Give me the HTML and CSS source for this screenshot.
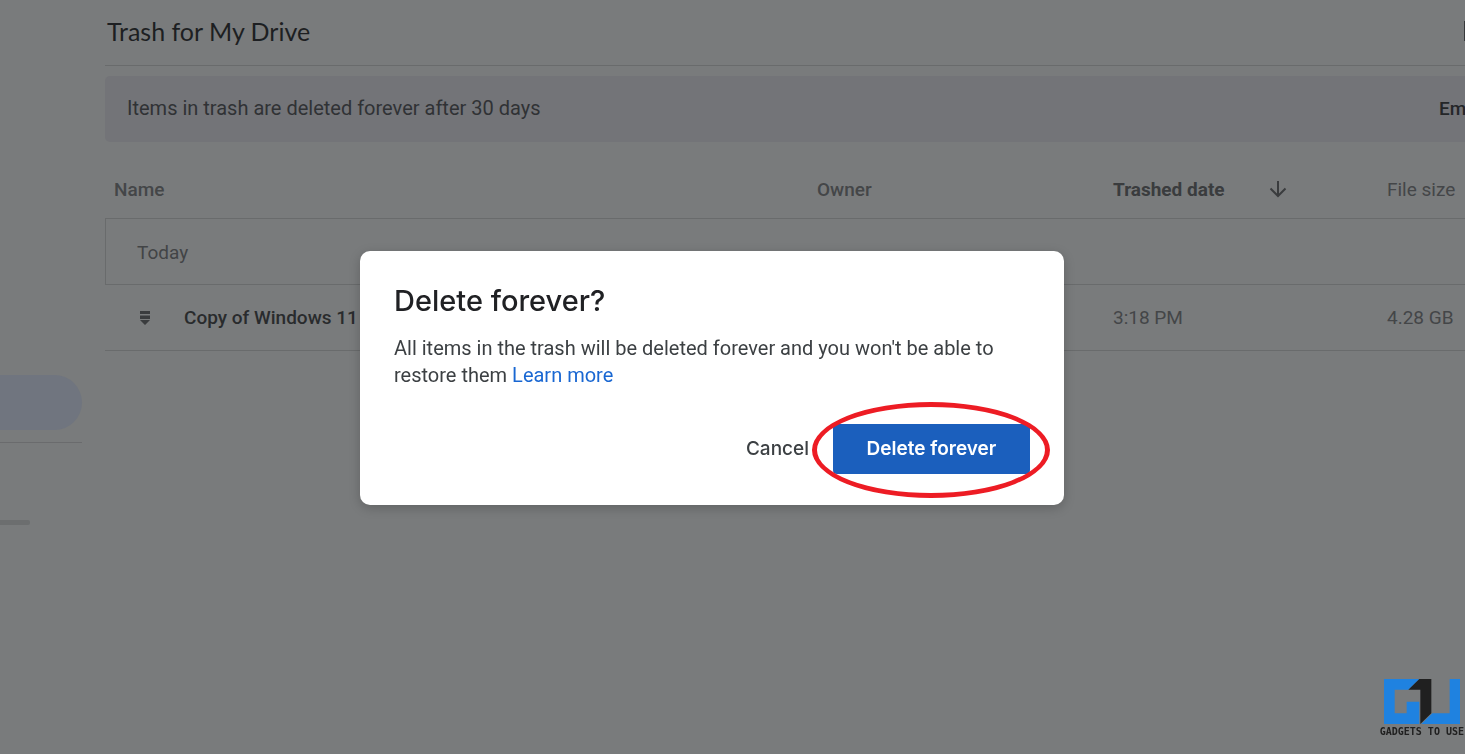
FILE: index.html
```html
<!DOCTYPE html>
<html lang="en">
<head>
<meta charset="utf-8">
<title>Trash for My Drive</title>
<link rel="stylesheet" href="styles.css">
</head>
<body>
<div class="app">
  <nav class="sidebar" aria-label="Drive">
    <div class="nav-active"></div>
    <div class="nav-divider"></div>
    <div class="storage-bar"></div>
  </nav>
  <main class="main">
    <header class="title-bar">
      <h1 class="title">Trash for My Drive</h1>
      <span class="view-icon"></span>
    </header>
    <section class="banner">
      <p class="banner-text">Items in trash are deleted forever after 30 days</p>
      <button class="banner-action" type="button">Em</button>
    </section>
    <table class="files">
      <colgroup>
        <col>
        <col class="col-owner">
        <col class="col-date">
        <col class="col-size">
      </colgroup>
      <thead>
        <tr>
          <th class="head-name">Name</th>
          <th>Owner</th>
          <th class="sorted"><span class="sort">Trashed date
            <svg class="arrow" viewBox="0 0 18 18" aria-hidden="true"><path d="M9 1V16M1.500 8.500L9 16L16.500 8.500" fill="none" stroke="currentColor" stroke-width="2"/></svg></span></th>
          <th class="head-size">File size</th>
        </tr>
      </thead>
      <tbody>
        <tr class="group"><td colspan="4">Today</td></tr>
        <tr>
          <td><span class="file"><svg class="file-icon" viewBox="0 0 10 14" aria-hidden="true"><path d="M0 0H10V3H0ZM0 4.500H10V8H0ZM0 9H10L5 14Z" fill="currentColor"/></svg><span class="file-name">Copy of Windows 11</span></span></td>
          <td></td>
          <td class="date">3:18 PM</td>
          <td class="size">4.28 GB</td>
        </tr>
      </tbody>
    </table>
  </main>
</div>

<div class="overlay">
  <section class="dialog" role="dialog" aria-modal="true" aria-labelledby="dialog-title">
    <h2 class="dialog-title" id="dialog-title">Delete forever?</h2>
    <p class="dialog-text">All items in the trash will be deleted forever and you won't be able to restore them <a class="link" href="#">Learn more</a></p>
    <div class="actions">
      <button class="cancel" type="button">Cancel</button>
      <div class="confirm-wrap">
        <button class="confirm" type="button">Delete forever</button>
        <span class="ring"></span>
      </div>
    </div>
  </section>
</div>

<div class="watermark">
  <svg class="logo" viewBox="57 45 228 135" aria-hidden="true">
    <path fill="#1f82e0" d="M57 45H163L130 77H89V148H125V113H163V180H57Z"/>
    <path fill="#202020" d="M163 45H199V148L166 180V77H130Z"/>
    <path fill="#1f82e0" d="M202 148H254V45H285V180H169Z"/>
  </svg>
  <span class="brand">GADGETS TO USE</span>
</div>
</body>
</html>
```
FILE: styles.css
```css
* { box-sizing: border-box; }

body {
  margin: 0;
  min-height: 100vh;
  overflow: hidden;
  background: #797b7c;
  color: #3a3c3e;
  font: 19px/27px Roboto, sans-serif;
}

h1, h2, p { margin: 0; }

button {
  border: 0;
  background: none;
  font: inherit;
  color: inherit;
  cursor: pointer;
}

.app {
  display: grid;
  grid-template-columns: 82px minmax(0, 1fr);
  column-gap: 23px;
  min-height: 100vh;
}

.sidebar { padding-top: 375px; }

.nav-active {
  height: 55px;
  border-radius: 0 28px 28px 0;
  background: #70757f;
}

.nav-divider {
  margin-top: 12px;
  border-top: 1px solid #6a6b6d;
}

.storage-bar {
  width: 30px;
  height: 5px;
  margin-top: 77px;
  border-radius: 0 2px 2px 0;
  background: #6c6e6f;
}

.title-bar {
  display: flex;
  align-items: center;
  justify-content: space-between;
  height: 66px;
  padding: 0 0 3px 2px;
  border-bottom: 1px solid #696b6c;
}

.title {
  color: #1d1f22;
  font: 400 25px/32px Lato, sans-serif;
}

.view-icon {
  width: 1px;
  height: 20px;
  background: #37393b;
}

.banner {
  display: flex;
  align-items: center;
  justify-content: space-between;
  height: 66px;
  margin-top: 10px;
  padding: 0 0 2px 22px;
  border-radius: 5px 0 0 5px;
  background: #737478;
  color: #303235;
}

.banner-text { font-size: 20px; }

.banner-action {
  width: 26px;
  padding: 0;
  overflow: hidden;
  color: #242628;
  font-weight: 500;
}

.files {
  width: 100%;
  border-collapse: separate;
  border-spacing: 0;
  table-layout: fixed;
}

.col-owner { width: 296px; }
.col-date { width: 274px; }
.col-size { width: 78px; }

.files th,
.files td {
  height: 66px;
  padding: 0;
  border-bottom: 1px solid #696b6c;
  text-align: left;
  white-space: nowrap;
}

.files th {
  height: 77px;
  padding-top: 18px;
  color: #444648;
  font-weight: 500;
}

.files .head-name { padding-left: 9px; }
.files .head-size { font-weight: 400; }
.files .sorted { color: #3a3c3e; font-weight: 700; }

.sort {
  display: flex;
  align-items: center;
  gap: 44px;
}

.arrow { width: 18px; height: 18px; }

.files .group td {
  padding: 2px 0 0 31px;
  border-left: 1px solid #696b6c;
  color: #424446;
}

.file {
  display: flex;
  align-items: center;
  gap: 34px;
  padding-left: 35px;
}

.file-icon { width: 10px; height: 14px; }
.file-name { color: #292b2d; font-weight: 500; }
.date, .size { color: #444648; }

.overlay {
  position: fixed;
  inset: 0;
  display: grid;
  place-items: center;
  padding: 2px 41px 0 0;
}

.dialog {
  width: 704px;
  max-width: 100%;
  padding: 32px 34px 31px;
  border-radius: 10px;
  background: #fff;
  box-shadow: 0 3px 12px rgba(0, 0, 0, 0.2);
}

.dialog-title {
  color: #202124;
  font: 500 29px/36px Inter, sans-serif;
}

.dialog-text {
  margin-top: 16px;
  color: #3c4043;
  font-size: 20px;
}

.link { color: #1967d2; text-decoration: none; }

.actions {
  display: flex;
  align-items: center;
  justify-content: flex-end;
  gap: 24px;
  margin-top: 35px;
}

.cancel {
  padding: 0 0 2px;
  color: #3c4043;
  font: 500 19px/27px Inter, sans-serif;
}

.confirm-wrap { position: relative; }

.confirm {
  display: block;
  width: 197px;
  height: 50px;
  padding: 0 0 2px;
  border-radius: 4px;
  background: #1b5fbd;
  color: #fff;
  font: 600 19px/27px Inter, sans-serif;
}

.ring {
  position: absolute;
  inset: -22px -20px -24px -21px;
  border: 5px solid #ed1c24;
  border-radius: 50%;
  pointer-events: none;
}

.watermark {
  position: fixed;
  right: 1px;
  bottom: 16px;
  display: flex;
  flex-direction: column;
  align-items: center;
  gap: 2px;
}

.logo { width: 76px; height: 45px; }

.brand {
  color: #202020;
  font: 700 10px/12px "DejaVu Sans Mono", monospace;
  white-space: nowrap;
}
```
